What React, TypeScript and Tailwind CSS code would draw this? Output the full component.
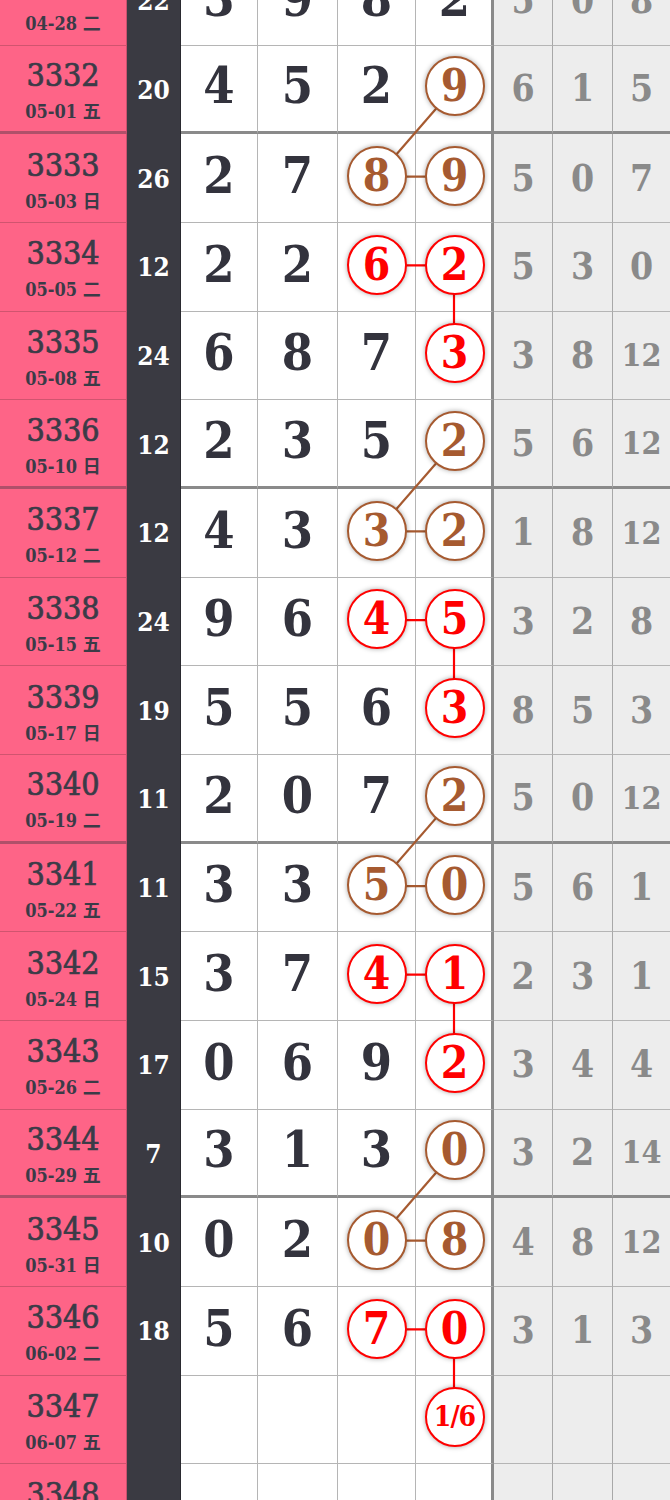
import React from 'react'

type Mark = 'brown' | 'red' | null

interface Row {
  id: string
  date: string
  sum: string
  nums: string[]
  gray: string[]
  c3?: Mark
  c4?: Mark
  thick?: boolean
}

const rows: Row[] = [
  { id: '3331', date: '04-28 二', sum: '22', nums: ['3', '9', '8', '2'], gray: ['5', '0', '8'] },
  { id: '3332', date: '05-01 五', sum: '20', nums: ['4', '5', '2', '9'], gray: ['6', '1', '5'], c4: 'brown', thick: true },
  { id: '3333', date: '05-03 日', sum: '26', nums: ['2', '7', '8', '9'], gray: ['5', '0', '7'], c3: 'brown', c4: 'brown' },
  { id: '3334', date: '05-05 二', sum: '12', nums: ['2', '2', '6', '2'], gray: ['5', '3', '0'], c3: 'red', c4: 'red' },
  { id: '3335', date: '05-08 五', sum: '24', nums: ['6', '8', '7', '3'], gray: ['3', '8', '12'], c4: 'red' },
  { id: '3336', date: '05-10 日', sum: '12', nums: ['2', '3', '5', '2'], gray: ['5', '6', '12'], c4: 'brown', thick: true },
  { id: '3337', date: '05-12 二', sum: '12', nums: ['4', '3', '3', '2'], gray: ['1', '8', '12'], c3: 'brown', c4: 'brown' },
  { id: '3338', date: '05-15 五', sum: '24', nums: ['9', '6', '4', '5'], gray: ['3', '2', '8'], c3: 'red', c4: 'red' },
  { id: '3339', date: '05-17 日', sum: '19', nums: ['5', '5', '6', '3'], gray: ['8', '5', '3'], c4: 'red' },
  { id: '3340', date: '05-19 二', sum: '11', nums: ['2', '0', '7', '2'], gray: ['5', '0', '12'], c4: 'brown', thick: true },
  { id: '3341', date: '05-22 五', sum: '11', nums: ['3', '3', '5', '0'], gray: ['5', '6', '1'], c3: 'brown', c4: 'brown' },
  { id: '3342', date: '05-24 日', sum: '15', nums: ['3', '7', '4', '1'], gray: ['2', '3', '1'], c3: 'red', c4: 'red' },
  { id: '3343', date: '05-26 二', sum: '17', nums: ['0', '6', '9', '2'], gray: ['3', '4', '4'], c4: 'red' },
  { id: '3344', date: '05-29 五', sum: '7', nums: ['3', '1', '3', '0'], gray: ['3', '2', '14'], c4: 'brown', thick: true },
  { id: '3345', date: '05-31 日', sum: '10', nums: ['0', '2', '0', '8'], gray: ['4', '8', '12'], c3: 'brown', c4: 'brown' },
  { id: '3346', date: '06-02 二', sum: '18', nums: ['5', '6', '7', '0'], gray: ['3', '1', '3'], c3: 'red', c4: 'red' },
  { id: '3347', date: '06-07 五', sum: '', nums: ['', '', '', '1/6'], gray: ['', '', ''], c4: 'red' },
  { id: '3348', date: '06-09 日', sum: '', nums: ['', '', '', ''], gray: ['', '', ''] },
]

const H = 88.67
const C3 = 377
const C4 = 454
const cy = (i: number) => i * H + H / 2 - 2

const BROWN = '#a65a30'
const RED = '#ff0000'

// connecting lines between marked numbers
const links: { x1: number; y1: number; x2: number; y2: number; color: string }[] = []
rows.forEach((r, i) => {
  const next = rows[i + 1]
  if (r.c3 && r.c4) links.push({ x1: C3, y1: cy(i), x2: C4, y2: cy(i), color: r.c4 === 'red' ? RED : BROWN })
  if (!next) return
  if (r.c4 === 'brown' && !r.c3 && next.c3 === 'brown') links.push({ x1: C4, y1: cy(i), x2: C3, y2: cy(i + 1), color: BROWN })
  if (r.c4 === 'red' && r.c3 && next.c4 === 'red' && !next.c3) links.push({ x1: C4, y1: cy(i), x2: C4, y2: cy(i + 1), color: RED })
})

const numW = ['w-[77px]', 'w-[80px]', 'w-[78px]', 'w-[78px]']
const grayW = ['w-[59px]', 'w-[60px]', 'w-[57px]']

function Circle({ value, mark }: { value: string; mark: Mark }) {
  const red = mark === 'red'
  return (
    <div
      className={`relative z-[2] -translate-y-[2px] w-[60px] h-[60px] rounded-full bg-white border-[2.5px] flex items-center justify-center shadow-[0_0_5px_rgba(0,0,0,0.35)] font-bold leading-none ${
        red ? 'border-[#ff0000] text-[#ff0000]' : 'border-[#a65a30] text-[#a65a30]'
      } ${value.length > 1 ? 'text-[28px] tracking-[-1px]' : 'text-[44px]'}`}
    >
      {value}
    </div>
  )
}

export default function App() {
  return (
    <div
      className="w-[670px] h-[1500px] overflow-hidden bg-white"
      style={{ fontFamily: '"DejaVu Serif Condensed", "DejaVu Serif", "Noto Sans CJK SC", serif' }}
    >
      <div className="relative -mt-[43px]">
        {rows.map((r, i) => (
          <div key={r.id} className="flex h-[88.67px]">
            {/* 期号 + 日期 */}
            <div
              className={`w-[127px] shrink-0 bg-[#fe6487] border-r border-r-[#c9526e] flex flex-col items-center justify-center text-[#3b3b47] ${
                r.thick ? 'border-b-[3px] border-b-[#b0506a]' : 'border-b border-b-[#d0546f]'
              }`}
            >
              <div className="text-[32px] font-normal leading-none mt-[3px] [-webkit-text-stroke:0.7px_#3b3b47]">{r.id}</div>
              <div className="text-[18px] font-bold leading-none mt-[12px]">{r.date}</div>
            </div>

            {/* 和值 */}
            <div className="w-[54px] shrink-0 bg-[#3a3a42] flex items-center justify-center text-white text-[26px] font-bold leading-none border-r border-r-[#2a2a30]">
              {r.sum}
            </div>

            {/* 开奖号码 */}
            {r.nums.map((n, j) => {
              const mark = j === 2 ? r.c3 : j === 3 ? r.c4 : null
              return (
                <div
                  key={j}
                  className={`${numW[j]} shrink-0 bg-white flex items-center justify-center ${
                    j === 3 ? 'border-r-[3px] border-r-[#8a8a8a] pl-[2px]' : 'border-r border-r-[#b5b5b5]'
                  } ${r.thick ? 'border-b-[3px] border-b-[#8a8a8a]' : 'border-b border-b-[#b5b5b5]'}`}
                >
                  {mark && n ? (
                    <Circle value={n} mark={mark} />
                  ) : (
                    <span className="-translate-y-[2px] text-[50px] font-bold leading-none text-[#33333d]">{n}</span>
                  )}
                </div>
              )
            })}

            {/* 遗漏 */}
            {r.gray.map((g, j) => (
              <div
                key={j}
                className={`${grayW[j]} shrink-0 bg-[#ededed] flex items-center justify-center font-bold leading-none text-[#8a8a8a] ${
                  j < 2 ? 'border-r border-r-[#a8a8a8]' : ''
                } ${r.thick ? 'border-b-[3px] border-b-[#8a8a8a]' : 'border-b border-b-[#b5b5b5]'} ${
                  g.length > 1 ? 'text-[32px]' : 'text-[37px]'
                }`}
              >
                {g}
              </div>
            ))}
          </div>
        ))}

        <svg className="absolute left-0 top-0 z-[1] pointer-events-none" width={670} height={rows.length * H}>
          {links.map((l, k) => (
            <line key={k} x1={l.x1} y1={l.y1} x2={l.x2} y2={l.y2} stroke={l.color} strokeWidth={2.2} />
          ))}
        </svg>
      </div>
    </div>
  )
}
